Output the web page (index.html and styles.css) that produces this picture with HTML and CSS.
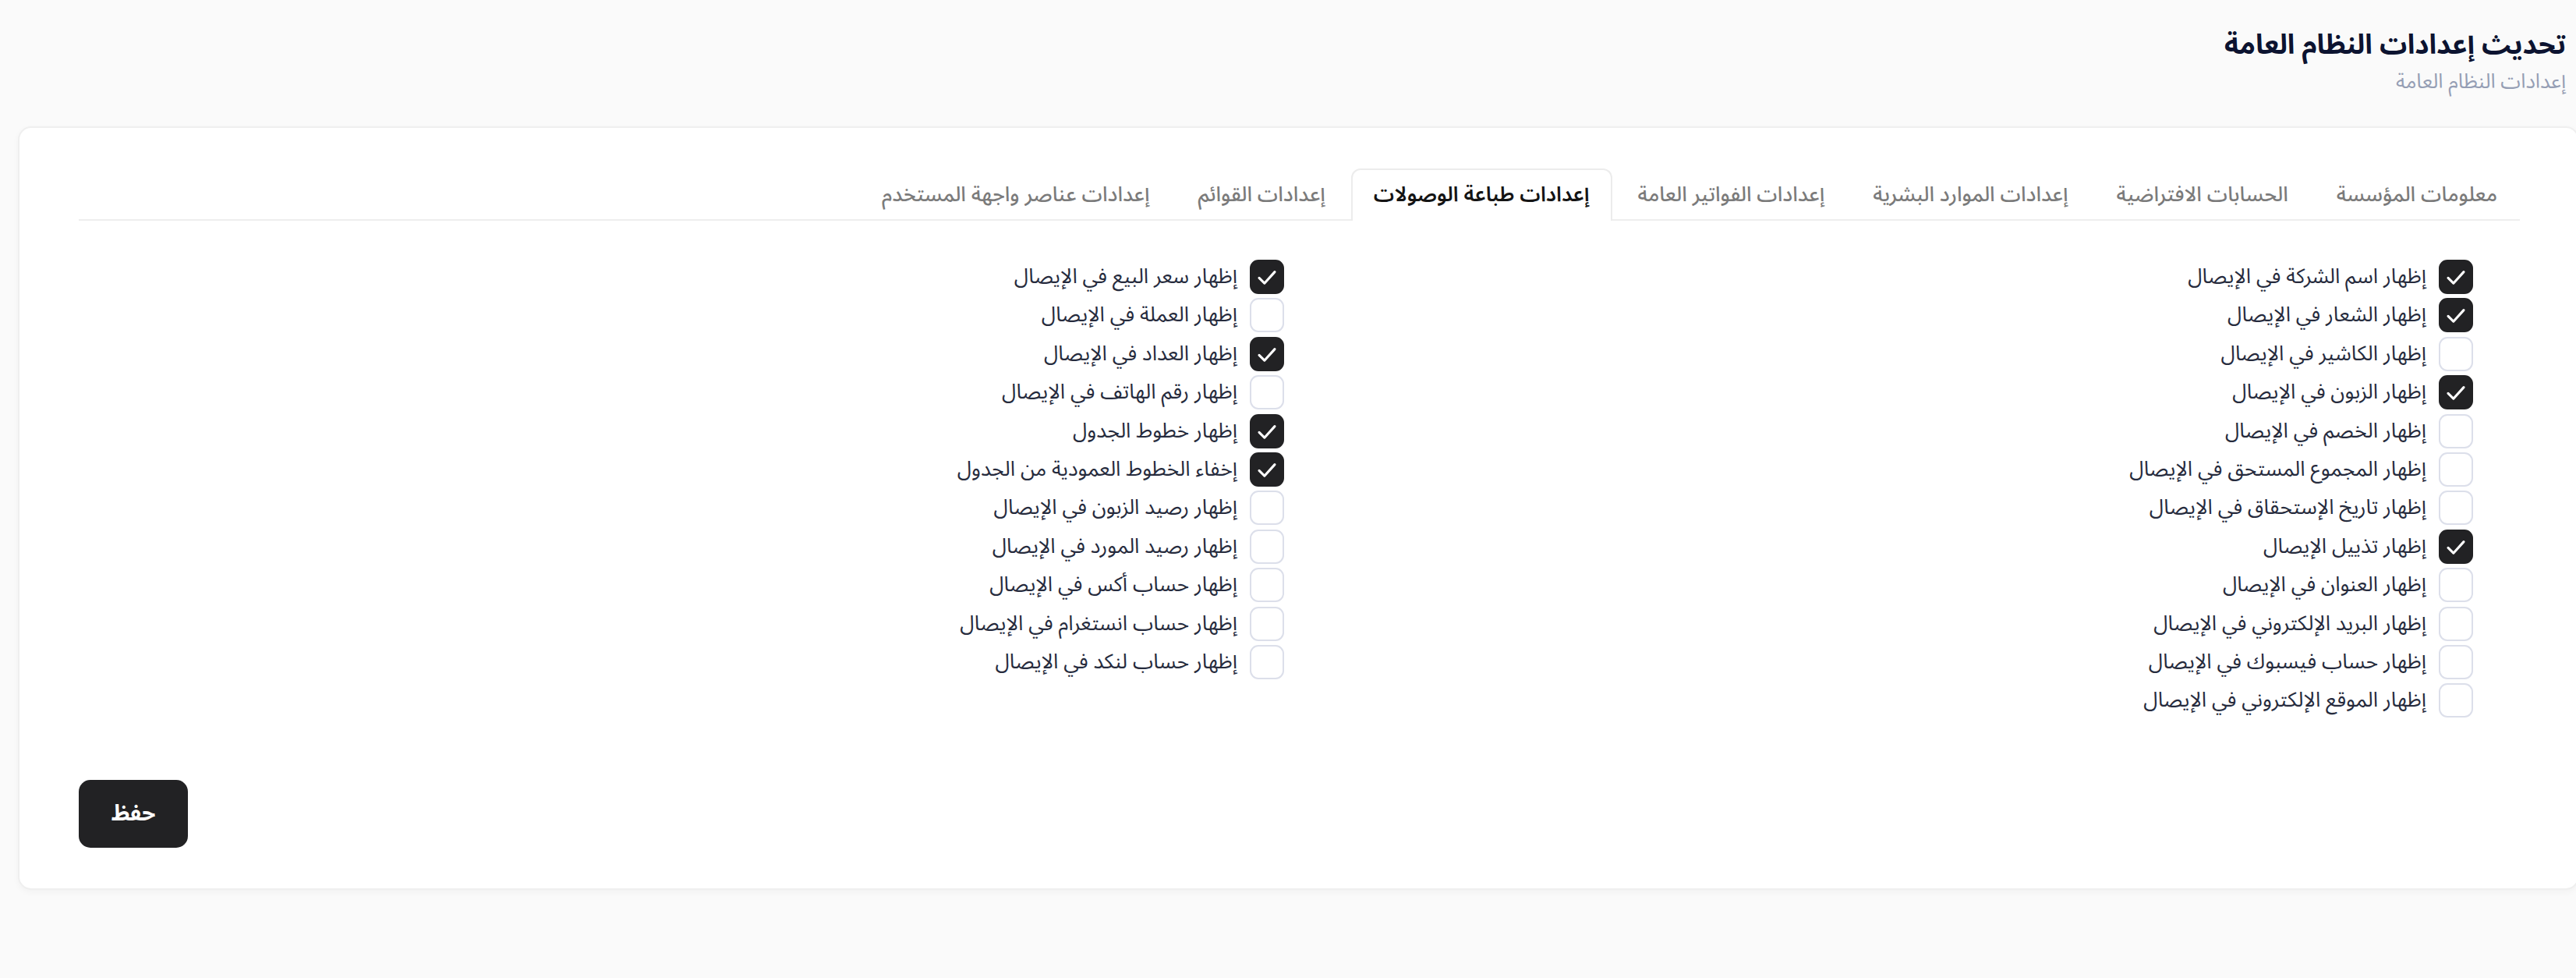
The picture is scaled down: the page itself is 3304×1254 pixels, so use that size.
FILE: index.html
```html
<!DOCTYPE html>
<html lang="ar" dir="rtl">
<head>
<meta charset="utf-8">
<title>تحديث إعدادات النظام العامة</title>
<link rel="stylesheet" href="styles.css">
</head>
<body>
<div class="page">
  <header class="page-head">
    <h1 class="title">تحديث إعدادات النظام العامة</h1>
    <p class="subtitle">إعدادات النظام العامة</p>
  </header>

  <section class="card">
    <nav class="tabs">
      <a class="tab">معلومات المؤسسة</a>
      <a class="tab">الحسابات الافتراضية</a>
      <a class="tab">إعدادات الموارد البشرية</a>
      <a class="tab">إعدادات الفواتير العامة</a>
      <a class="tab active">إعدادات طباعة الوصولات</a>
      <a class="tab">إعدادات القوائم</a>
      <a class="tab">إعدادات عناصر واجهة المستخدم</a>
    </nav>

    <div class="options">
      <div class="col">
        <label class="opt"><span class="box on"><svg viewBox="0 0 44 44"><path d="M11 23.5 L18.5 31 L33 15"/></svg></span><span class="lbl">إظهار اسم الشركة في الإيصال</span></label>
        <label class="opt"><span class="box on"><svg viewBox="0 0 44 44"><path d="M11 23.5 L18.5 31 L33 15"/></svg></span><span class="lbl">إظهار الشعار في الإيصال</span></label>
        <label class="opt"><span class="box"></span><span class="lbl">إظهار الكاشير في الإيصال</span></label>
        <label class="opt"><span class="box on"><svg viewBox="0 0 44 44"><path d="M11 23.5 L18.5 31 L33 15"/></svg></span><span class="lbl">إظهار الزبون في الإيصال</span></label>
        <label class="opt"><span class="box"></span><span class="lbl">إظهار الخصم في الإيصال</span></label>
        <label class="opt"><span class="box"></span><span class="lbl">إظهار المجموع المستحق في الإيصال</span></label>
        <label class="opt"><span class="box"></span><span class="lbl">إظهار تاريخ الإستحقاق في الإيصال</span></label>
        <label class="opt"><span class="box on"><svg viewBox="0 0 44 44"><path d="M11 23.5 L18.5 31 L33 15"/></svg></span><span class="lbl">إظهار تذييل الإيصال</span></label>
        <label class="opt"><span class="box"></span><span class="lbl">إظهار العنوان في الإيصال</span></label>
        <label class="opt"><span class="box"></span><span class="lbl">إظهار البريد الإلكتروني في الإيصال</span></label>
        <label class="opt"><span class="box"></span><span class="lbl">إظهار حساب فيسبوك في الإيصال</span></label>
        <label class="opt"><span class="box"></span><span class="lbl">إظهار الموقع الإلكتروني في الإيصال</span></label>
      </div>
      <div class="col">
        <label class="opt"><span class="box on"><svg viewBox="0 0 44 44"><path d="M11 23.5 L18.5 31 L33 15"/></svg></span><span class="lbl">إظهار سعر البيع في الإيصال</span></label>
        <label class="opt"><span class="box"></span><span class="lbl">إظهار العملة في الإيصال</span></label>
        <label class="opt"><span class="box on"><svg viewBox="0 0 44 44"><path d="M11 23.5 L18.5 31 L33 15"/></svg></span><span class="lbl">إظهار العداد في الإيصال</span></label>
        <label class="opt"><span class="box"></span><span class="lbl">إظهار رقم الهاتف في الإيصال</span></label>
        <label class="opt"><span class="box on"><svg viewBox="0 0 44 44"><path d="M11 23.5 L18.5 31 L33 15"/></svg></span><span class="lbl">إظهار خطوط الجدول</span></label>
        <label class="opt"><span class="box on"><svg viewBox="0 0 44 44"><path d="M11 23.5 L18.5 31 L33 15"/></svg></span><span class="lbl">إخفاء الخطوط العمودية من الجدول</span></label>
        <label class="opt"><span class="box"></span><span class="lbl">إظهار رصيد الزبون في الإيصال</span></label>
        <label class="opt"><span class="box"></span><span class="lbl">إظهار رصيد المورد في الإيصال</span></label>
        <label class="opt"><span class="box"></span><span class="lbl">إظهار حساب أكس في الإيصال</span></label>
        <label class="opt"><span class="box"></span><span class="lbl">إظهار حساب انستغرام في الإيصال</span></label>
        <label class="opt"><span class="box"></span><span class="lbl">إظهار حساب لنكد في الإيصال</span></label>
      </div>
    </div>

    <div class="actions">
      <button class="save" type="button">حفظ</button>
    </div>
  </section>
</div>
</body>
</html>
```

FILE: styles.css
```css
* { box-sizing: border-box; }

html, body {
  margin: 0;
  padding: 0;
  background: #fafafa;
  overflow: hidden;
}

body {
  font-family: "Noto Sans Arabic", "Noto Sans", "DejaVu Sans", sans-serif;
  color: #262b3d;
}

.page {
  padding: 0 0 0 23px;
  height: 1254px;
}

.page-head {
  padding: 34px 13px 0 0;
}

.title {
  margin: 0;
  font-size: 35px;
  line-height: 48px;
  font-weight: 700;
  color: #0c1330;
}

.subtitle {
  margin: 5px 0 0;
  font-size: 26px;
  line-height: 36px;
  color: #959eb4;
}

.card {
  margin: 39px -4px 0 0;
  background: #fff;
  border: 2px solid #efefef;
  border-radius: 17px;
  box-shadow: 0 3px 8px rgba(0, 0, 0, 0.035);
  padding: 52px 74px 52px 76px;
}

.tabs {
  display: flex;
  gap: 4px;
  border-bottom: 2px solid #eeeeee;
}

.tab {
  display: block;
  height: 65px;
  padding: 0 27px;
  font-size: 26.4px;
  line-height: 63px;
  font-weight: 500;
  color: #7b7b7b;
  border: 2px solid transparent;
  border-bottom: 0;
  border-radius: 12px 12px 0 0;
  white-space: nowrap;
}

.tab.active {
  color: #141414;
  font-weight: 600;
  background: #fff;
  border-color: #ececec;
  height: 67px;
  margin-bottom: -2px;
}

.options {
  display: grid;
  grid-template-columns: 1fr 1fr;
  padding: 0 60px 0 21px;
  margin-top: 50px;
}

.col {
  display: flex;
  flex-direction: column;
  gap: 5.4px;
}

.opt {
  display: flex;
  align-items: center;
  gap: 16px;
  height: 44px;
}

.box {
  flex: none;
  width: 44px;
  height: 44px;
  border-radius: 11px;
  border: 2px solid #dcdfea;
  background: #fff;
  display: flex;
}

.box.on {
  background: #222224;
  border-color: #222224;
}

.box svg {
  width: 40px;
  height: 40px;
}

.box svg path {
  fill: none;
  stroke: #fff;
  stroke-width: 3.4;
  stroke-linecap: round;
  stroke-linejoin: round;
}

.lbl {
  font-size: 26.5px;
  line-height: 44px;
  color: #262b3d;
  white-space: nowrap;
}

.actions {
  display: flex;
  justify-content: flex-end;
  margin-top: 80px;
}

.save {
  width: 140px;
  height: 87px;
  border: 0;
  border-radius: 15px;
  background: #222224;
  color: #fff;
  font-family: "Noto Sans Arabic", "Noto Sans", "DejaVu Sans", sans-serif;
  font-size: 28px;
  font-weight: 700;
}
```
